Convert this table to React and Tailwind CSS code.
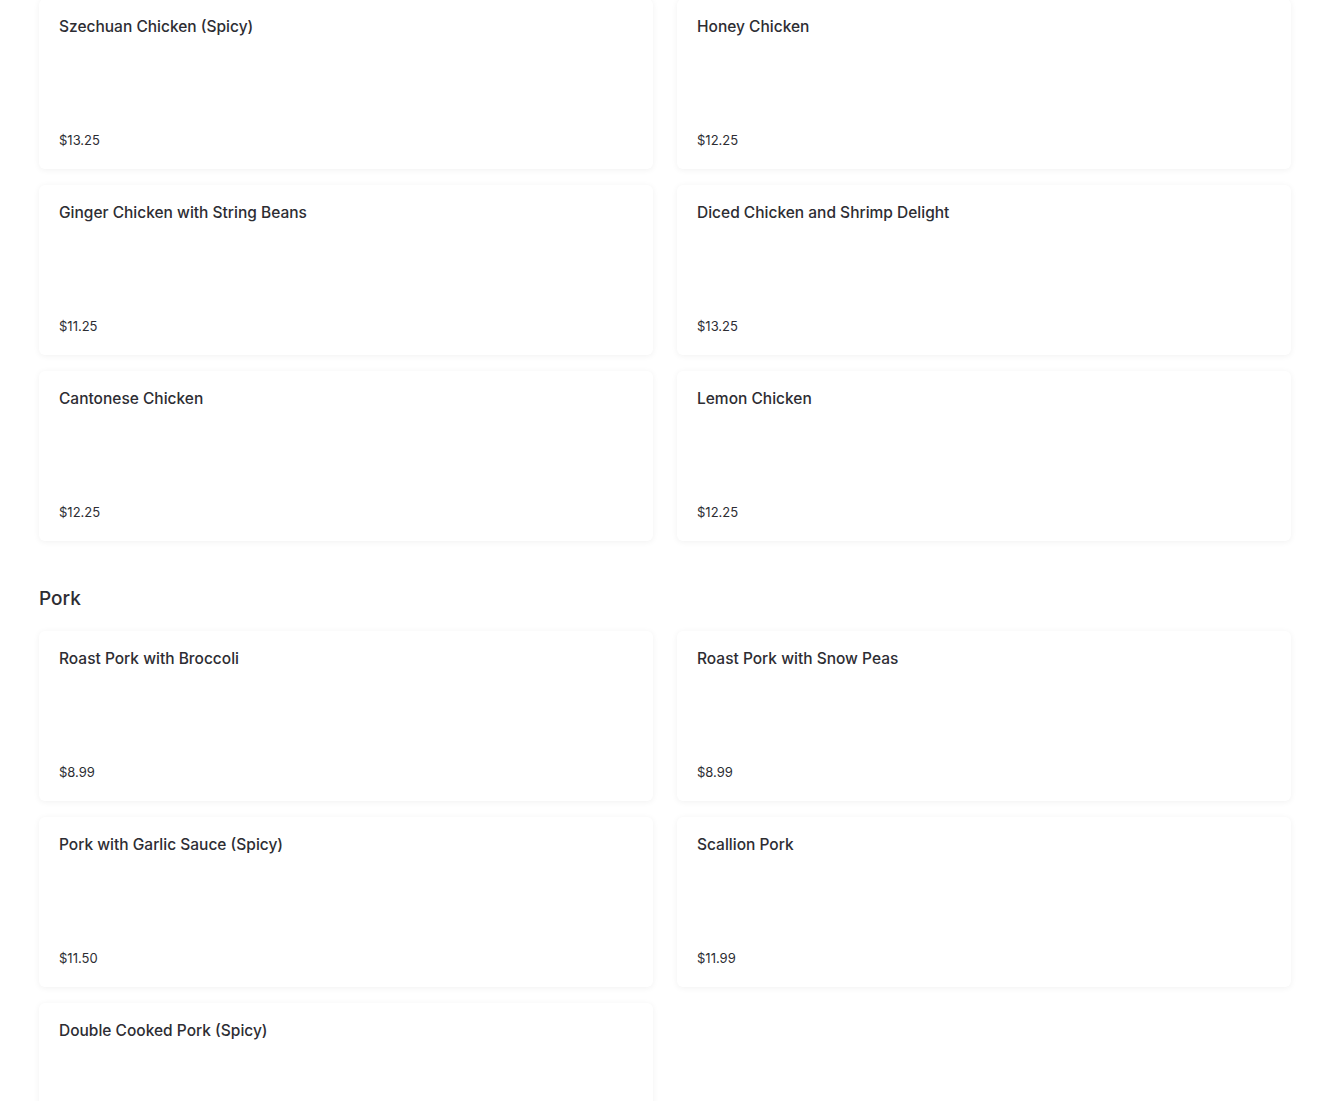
const chicken = [
  { name: 'Szechuan Chicken (Spicy)', price: '$13.25' },
  { name: 'Honey Chicken', price: '$12.25' },
  { name: 'Ginger Chicken with String Beans', price: '$11.25' },
  { name: 'Diced Chicken and Shrimp Delight', price: '$13.25' },
  { name: 'Cantonese Chicken', price: '$12.25' },
  { name: 'Lemon Chicken', price: '$12.25' },
];

const pork = [
  { name: 'Roast Pork with Broccoli', price: '$8.99' },
  { name: 'Roast Pork with Snow Peas', price: '$8.99' },
  { name: 'Pork with Garlic Sauce (Spicy)', price: '$11.50' },
  { name: 'Scallion Pork', price: '$11.99' },
  { name: 'Double Cooked Pork (Spicy)', price: '$9.99' },
];

function ItemCard({ item }) {
  return (
    <div className="h-[170px] bg-white rounded-md shadow-[0_1px_6px_rgba(0,0,0,0.06)] px-5 pt-4 pb-[19px] flex flex-col justify-between">
      <h3 className="text-[15.5px] leading-6 font-medium text-[#2d2d33]">{item.name}</h3>
      <p className="text-[13px] leading-5 text-[#2d2d33]">{item.price}</p>
    </div>
  );
}

export default function App() {
  return (
    <div
      className="min-h-screen bg-white px-[39px] overflow-hidden"
      style={{ fontFamily: '"Inter", "Noto Sans", sans-serif' }}
    >
      <div className="-mt-[1px] grid grid-cols-2 gap-x-6 gap-y-4">
        {chicken.map((item) => (
          <ItemCard key={item.name} item={item} />
        ))}
      </div>

      <h2 className="mt-[44px] mb-[18px] text-[19px] leading-7 font-medium text-[#2d2d33]">Pork</h2>

      <div className="grid grid-cols-2 gap-x-6 gap-y-4 pb-10">
        {pork.map((item) => (
          <ItemCard key={item.name} item={item} />
        ))}
      </div>
    </div>
  );
}
